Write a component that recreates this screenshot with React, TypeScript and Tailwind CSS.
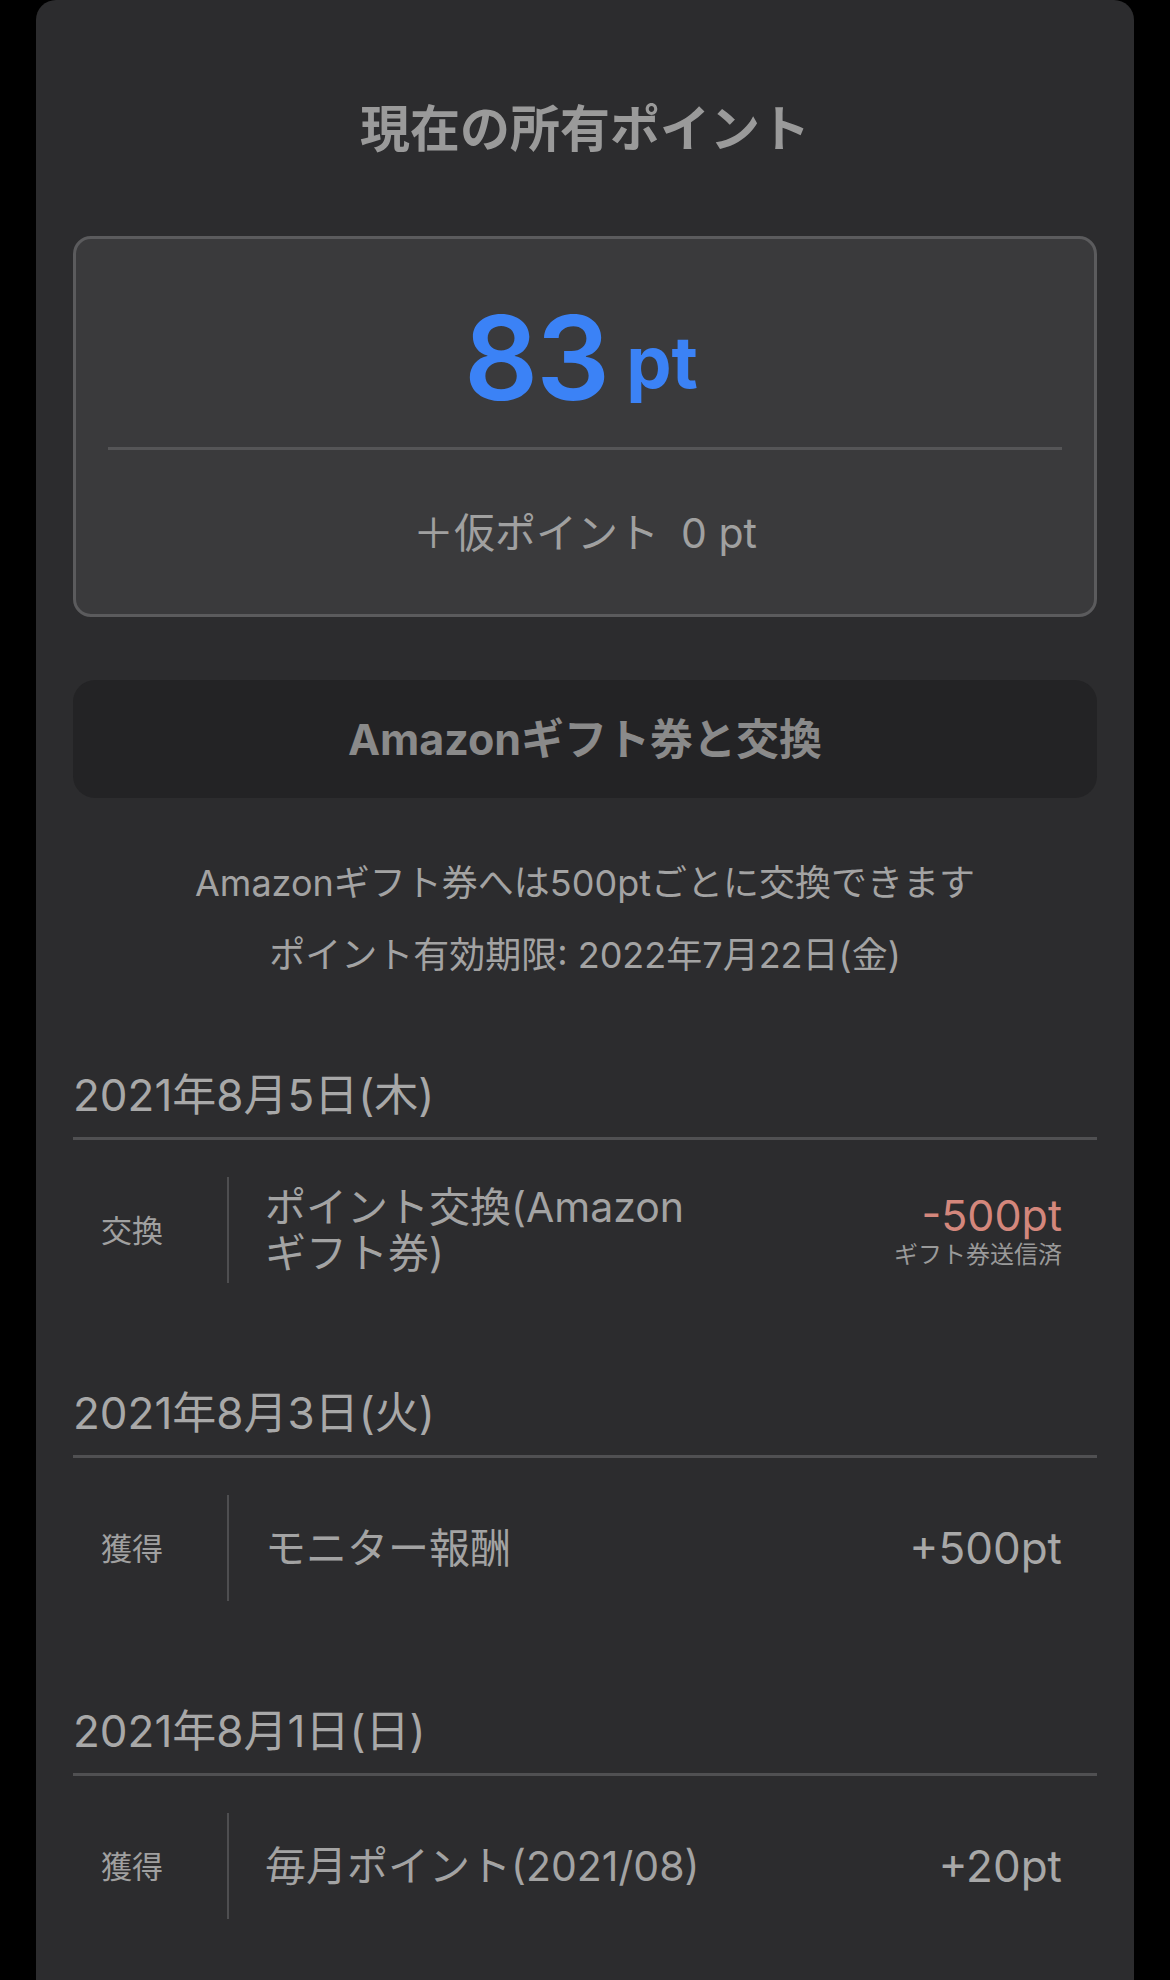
const HISTORY = [
  {
    date: "2021年8月5日(木)",
    kind: "交換",
    title: ["ポイント交換(Amazon", "ギフト券)"],
    amount: "-500pt",
    negative: true,
    note: "ギフト券送信済",
  },
  {
    date: "2021年8月3日(火)",
    kind: "獲得",
    title: ["モニター報酬"],
    amount: "+500pt",
    negative: false,
    note: "",
  },
  {
    date: "2021年8月1日(日)",
    kind: "獲得",
    title: ["毎月ポイント(2021/08)"],
    amount: "+20pt",
    negative: false,
    note: "",
  },
];

const App = () => {
  return (
    <div
      className="min-h-[1980px] w-full bg-black"
      style={{ fontFamily: 'Inter, "Noto Sans CJK JP", sans-serif' }}
    >
      <div className="mx-[36px] min-h-[1980px] rounded-t-[20px] bg-[#2c2c2e] px-[37px] pt-[104px]">
        <h1 className="text-center text-[50px] font-bold leading-[50px] text-[#9a9a9a]">
          現在の所有ポイント
        </h1>

        {/* point box */}
        <div className="mt-[82px] h-[381px] rounded-[18px] border-[3px] border-[#5b5b5d] bg-[#3a3a3c] px-[32px]">
          <div className="flex h-[208px] items-center justify-center pt-[30px] pr-[8px] text-[#3b82f6]">
            <span className="text-[116px] font-semibold leading-none tracking-[-2px]">83</span>
            <span className="ml-[18px] mt-[8px] text-[72px] font-bold leading-none">pt</span>
          </div>
          <div className="h-[3px] bg-[#555557]" />
          <div className="flex h-[167px] items-center justify-center text-[41px] leading-none text-[#a0a0a0]">
            <span>＋仮ポイント</span>
            <span className="ml-[22px]">0 pt</span>
          </div>
        </div>

        <button className="mt-[63px] flex h-[118px] w-full items-center justify-center rounded-[22px] bg-[#232325] text-[43px] font-bold leading-none text-[#8a8a8a]">
          Amazonギフト券と交換
        </button>

        <div className="mt-[66px] flex flex-col items-center gap-[34px] text-[36px] leading-[38px] text-[#a3a3a3]">
          <p>Amazonギフト券へは500ptごとに交換できます</p>
          <p>ポイント有効期限: 2022年7月22日(金)</p>
        </div>

        <div className="mt-[96px] flex flex-col gap-[105px]">
          {HISTORY.map((item, i) => (
            <section key={i}>
              <div className="border-b-[3px] border-[#505052] pb-[17px] text-[44px] leading-[50px] text-[#a8a8a8]">
                {item.date}
              </div>
              <div className="mt-[37px] flex h-[106px] items-center pr-[35px]">
                <div className="w-[118px] text-center text-[31px] leading-none text-[#a0a0a0]">
                  {item.kind}
                </div>
                <div className="ml-[36px] h-full w-[2px] bg-[#4e4e50]" />
                <div className="ml-[36px] flex-1 text-[41px] leading-[46px] text-[#a3a3a3]">
                  {item.title.map((t, j) => (
                    <div key={j}>{t}</div>
                  ))}
                </div>
                <div className="flex flex-col items-end">
                  <div
                    className={
                      item.negative
                        ? "text-[43px] leading-[44px] text-[#d4877c]"
                        : "text-[44px] leading-[48px] text-[#a8a8a8]"
                    }
                  >
                    {item.amount}
                  </div>
                  {item.note && (
                    <div className="mt-[6px] text-[24px] leading-[24px] text-[#9a9a9a]">{item.note}</div>
                  )}
                </div>
              </div>
            </section>
          ))}
        </div>
      </div>
    </div>
  );
};

export default App;
